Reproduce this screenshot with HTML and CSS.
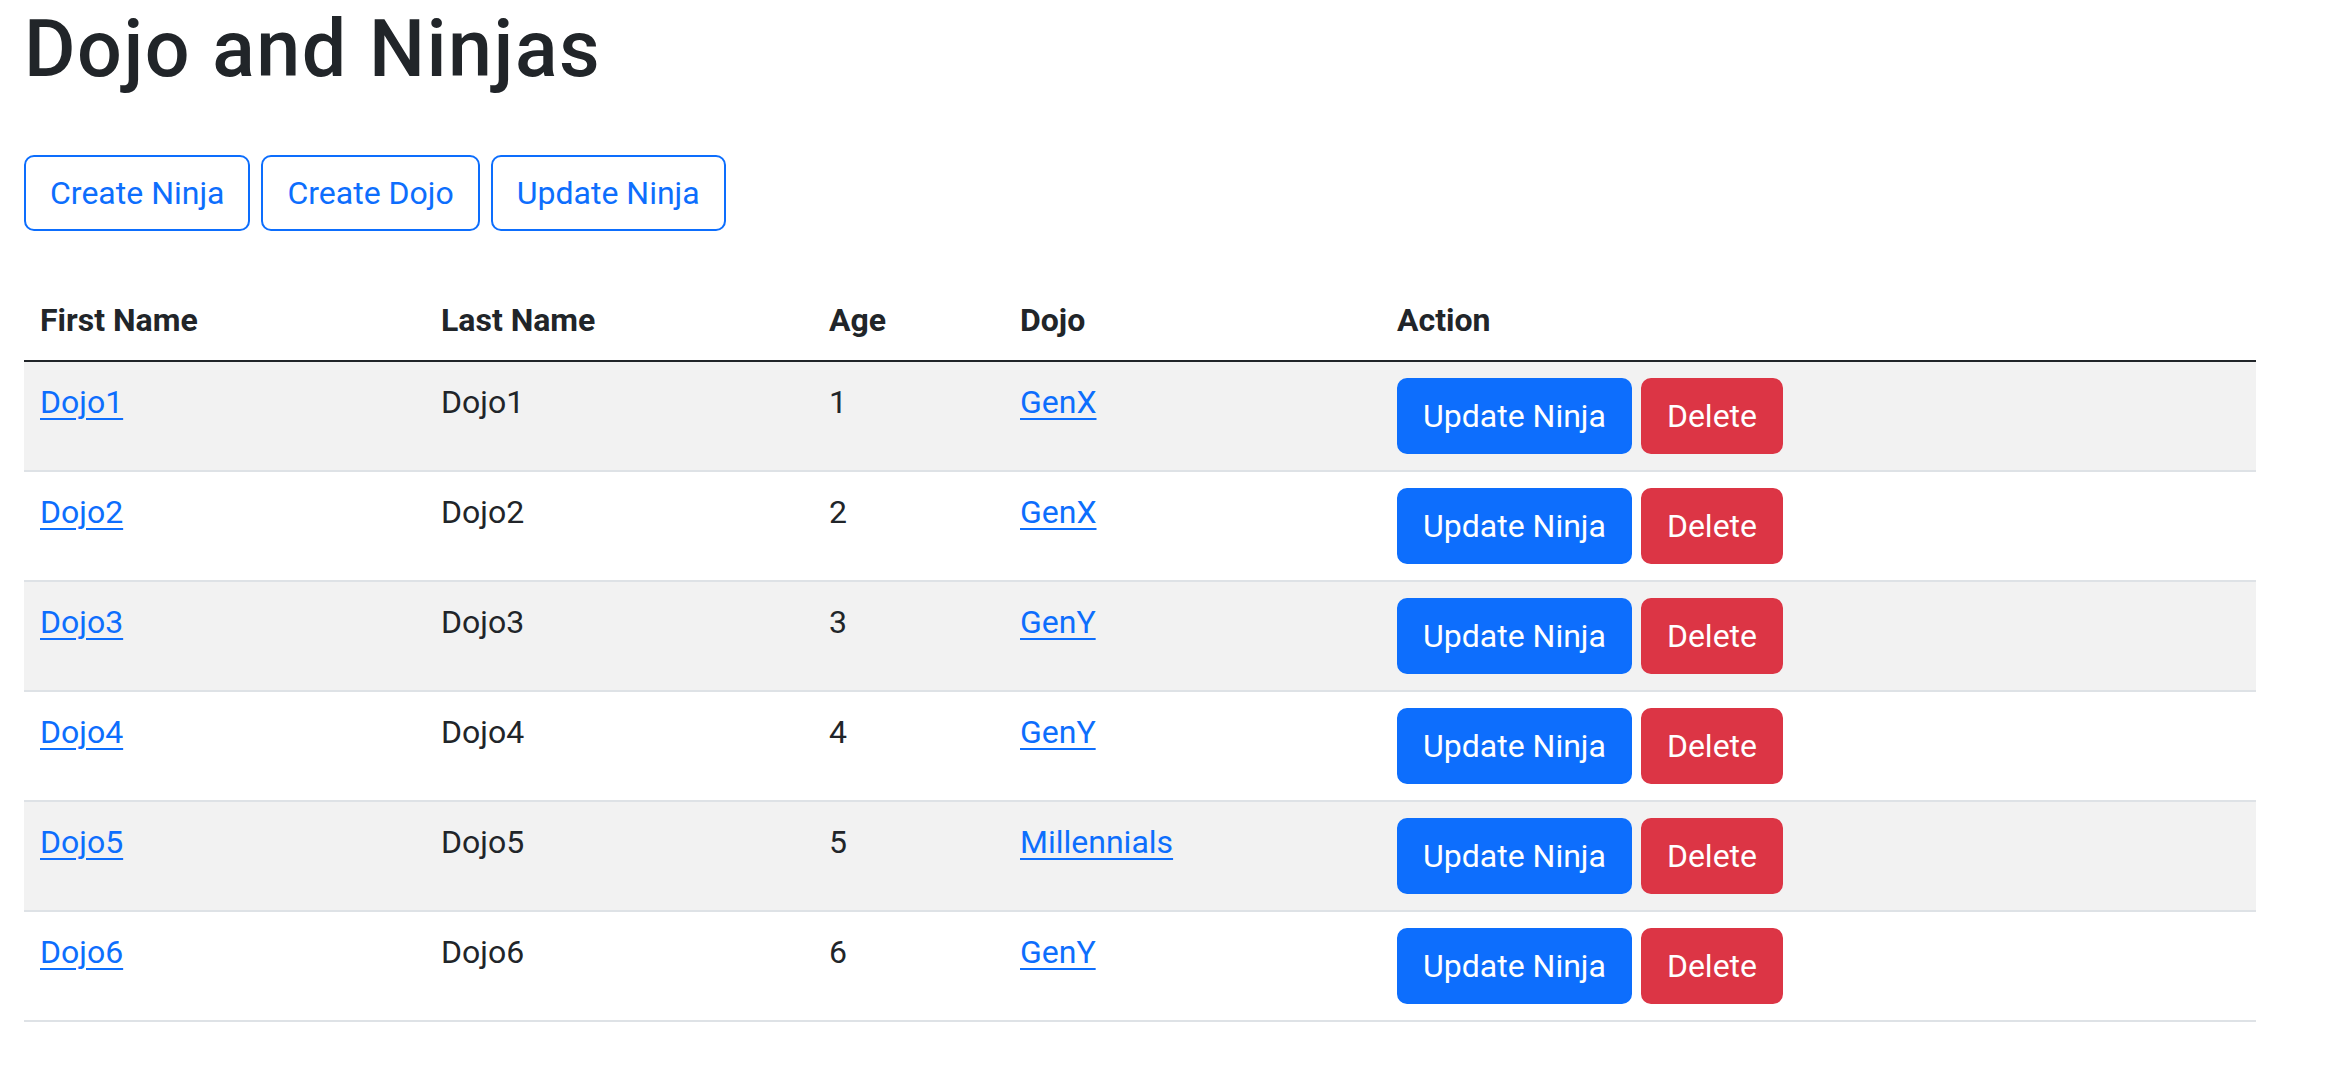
FILE: index.html
```html
<!DOCTYPE html>
<html lang="en">
<head>
<meta charset="utf-8">
<title>Dojo and Ninjas</title>
<link rel="stylesheet" href="styles.css">
</head>
<body>
<div class="container">
  <h1 class="title">Dojo and Ninjas</h1>
  <div class="top-actions">
    <a class="btn btn-outline" href="#">Create Ninja</a>
    <a class="btn btn-outline" href="#">Create Dojo</a>
    <a class="btn btn-outline" href="#">Update Ninja</a>
  </div>
  <table class="table">
    <colgroup>
      <col class="c-first">
      <col class="c-last">
      <col class="c-age">
      <col class="c-dojo">
      <col class="c-action">
    </colgroup>
    <thead>
      <tr><th>First Name</th><th>Last Name</th><th>Age</th><th>Dojo</th><th>Action</th></tr>
    </thead>
    <tbody>
      <tr class="odd"><td><a href="#">Dojo1</a></td><td>Dojo1</td><td>1</td><td><a href="#">GenX</a></td><td><div class="row-actions"><a class="btn btn-primary" href="#">Update Ninja</a><a class="btn btn-danger" href="#">Delete</a></div></td></tr>
      <tr><td><a href="#">Dojo2</a></td><td>Dojo2</td><td>2</td><td><a href="#">GenX</a></td><td><div class="row-actions"><a class="btn btn-primary" href="#">Update Ninja</a><a class="btn btn-danger" href="#">Delete</a></div></td></tr>
      <tr class="odd"><td><a href="#">Dojo3</a></td><td>Dojo3</td><td>3</td><td><a href="#">GenY</a></td><td><div class="row-actions"><a class="btn btn-primary" href="#">Update Ninja</a><a class="btn btn-danger" href="#">Delete</a></div></td></tr>
      <tr><td><a href="#">Dojo4</a></td><td>Dojo4</td><td>4</td><td><a href="#">GenY</a></td><td><div class="row-actions"><a class="btn btn-primary" href="#">Update Ninja</a><a class="btn btn-danger" href="#">Delete</a></div></td></tr>
      <tr class="odd"><td><a href="#">Dojo5</a></td><td>Dojo5</td><td>5</td><td><a href="#">Millennials</a></td><td><div class="row-actions"><a class="btn btn-primary" href="#">Update Ninja</a><a class="btn btn-danger" href="#">Delete</a></div></td></tr>
      <tr><td><a href="#">Dojo6</a></td><td>Dojo6</td><td>6</td><td><a href="#">GenY</a></td><td><div class="row-actions"><a class="btn btn-primary" href="#">Update Ninja</a><a class="btn btn-danger" href="#">Delete</a></div></td></tr>
    </tbody>
  </table>
</div>
</body>
</html>
```
FILE: styles.css
```css
* { box-sizing: border-box; }

html, body {
  margin: 0;
  padding: 0;
  background: #fff;
}

body {
  font-family: Roboto, "Noto Sans", "Liberation Sans", sans-serif;
  font-size: 32px;
  line-height: 1.5;
  color: #212529;
}

.container {
  width: 2256px;
  padding-left: 24px;
}

.title {
  margin: 0 0 16px;
  padding-top: 2px;
  font-size: 79px;
  font-weight: 500;
  line-height: 1.2;
  letter-spacing: 1.5px;
  color: #212529;
}

.top-actions {
  display: flex;
  gap: 11px;
  margin-top: 58px;
}

.btn {
  display: inline-block;
  padding: 12px 24px;
  border: 2px solid transparent;
  border-radius: 10px;
  font-size: 32px;
  line-height: 48px;
  text-decoration: none;
  white-space: nowrap;
}

.btn-outline {
  color: #0d6efd;
  border-color: #0d6efd;
  background: #fff;
}

.btn-primary {
  color: #fff;
  background: #0d6efd;
  border-color: #0d6efd;
}

.btn-danger {
  color: #fff;
  background: #dc3545;
  border-color: #dc3545;
}

.table {
  width: 2232px;
  margin-top: 49px;
  border-collapse: collapse;
  table-layout: fixed;
  vertical-align: top;
}

.c-first { width: 401px; }
.c-last { width: 388px; }
.c-age { width: 191px; }
.c-dojo { width: 377px; }
.c-action { width: 875px; }

.table th,
.table td {
  padding: 16px;
  text-align: left;
  vertical-align: top;
}

.table th {
  font-weight: 700;
  border-bottom: 2px solid #212529;
}

.table td {
  border-bottom: 2px solid #dee2e6;
}

.table tr.odd td {
  background: #f2f2f2;
}

.table a {
  color: #0d6efd;
  text-decoration: underline;
  text-decoration-thickness: 2px;
  text-underline-offset: 5px;
}

.table .btn {
  text-decoration: none;
}

.table .btn-primary,
.table .btn-danger {
  color: #fff;
}

.row-actions {
  display: flex;
  gap: 9px;
}
```
